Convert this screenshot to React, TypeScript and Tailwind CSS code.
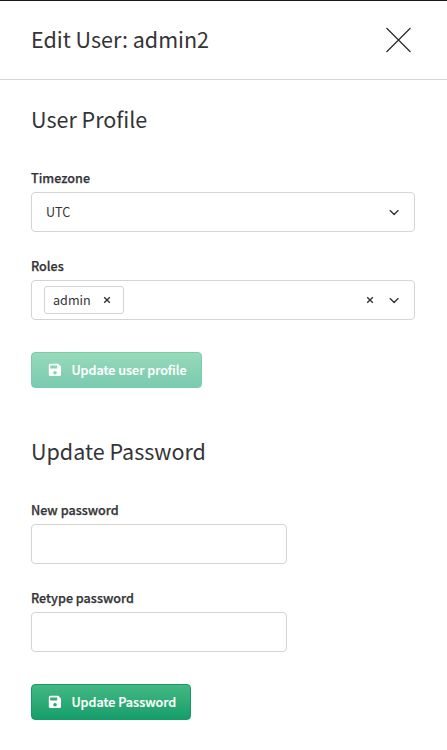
import type { ReactNode } from "react";

function Chevron() {
  return (
    <svg className="h-4 w-4 shrink-0" viewBox="0 0 16 16" fill="none" stroke="#343437" strokeWidth="1.35" strokeLinecap="round" strokeLinejoin="round">
      <path d="M4.1 6.6L8.1 10.5L12.1 6.6" />
    </svg>
  );
}

function Cross() {
  return (
    <svg className="h-2 w-2 shrink-0" viewBox="0 0 8 8" fill="none" stroke="#343437" strokeWidth="1.4">
      <path d="M1.2 1.2L6.8 6.8M6.8 1.2L1.2 6.8" />
    </svg>
  );
}

function SaveIcon() {
  return (
    <svg className="h-4 w-4 shrink-0" viewBox="0 0 16 16" fill="white">
      <path fillRule="evenodd" d="M3.4 1.8H11.2L14 4.4V12.6A1.5 1.5 0 0 1 12.5 14.1H3.4A1.6 1.6 0 0 1 1.8 12.5V3.5A1.7 1.7 0 0 1 3.4 1.8ZM3.2 3.5V6.6H10.2V3.5ZM8 8.9A1.8 1.8 0 1 0 8 12.5A1.8 1.8 0 1 0 8 8.9Z" />
    </svg>
  );
}

function Label({ children }: { children: ReactNode }) {
  return <div className="mb-1 h-5 text-[12.6px] leading-5 font-medium whitespace-nowrap [-webkit-text-stroke:0.25px_currentColor]">{children}</div>;
}

function Heading({ children }: { children: ReactNode }) {
  return <h2 className="h-8 text-[21.5px] leading-[30px] font-normal whitespace-nowrap">{children}</h2>;
}

export default function App() {
  return (
    <main className="h-[750px] w-[447px] overflow-hidden border-t border-[#17161a] bg-white font-['Noto_Sans_CJK_JP',sans-serif] text-[#343437]">
      <header className="flex h-[79px] items-center justify-between border-b border-[#d4d4d5] pr-9 pl-[31px]">
        <Heading>Edit User: admin2</Heading>
        <button aria-label="Close">
          <svg className="h-[26px] w-[26px]" viewBox="0 0 26 26" fill="none" stroke="#252528" strokeWidth="1.15">
            <path d="M1.5 1L25.5 25M25.5 1L1.5 25" />
          </svg>
        </button>
      </header>
      <div className="px-[31px] pt-6">
        <Heading>User Profile</Heading>
        <div className="mt-8 w-[384px]">
          <Label>Timezone</Label>
          <div className="flex h-10 items-center justify-between rounded-[4px] border border-[#d4d4d5] pr-3 pl-[14px] text-[12.6px]">
            <span>UTC</span>
            <Chevron />
          </div>
        </div>
        <div className="mt-6 w-[384px]">
          <Label>Roles</Label>
          <div className="flex h-10 items-center rounded-[4px] border border-[#d4d4d5] px-3">
            <div className="flex h-7 w-20 items-center justify-between rounded-[3px] border border-[#d4d4d5] pr-[12.5px] pl-2 text-[12.6px]">
              <span>admin</span>
              <Cross />
            </div>
            <div className="ml-auto flex items-center gap-3">
              <Cross />
              <Chevron />
            </div>
          </div>
        </div>
        <button className="mt-8 flex h-9 w-[171px] items-center rounded-[4px] border border-[#7bcbaf] bg-linear-to-b from-[#97dab9] to-[#7acab1] pl-[15px] text-[12.6px] font-medium whitespace-nowrap text-white [-webkit-text-stroke:0.2px_white]">
          <SaveIcon />
          <span className="ml-[8.4px]">Update user profile</span>
        </button>
        <div className="mt-12">
          <Heading>Update Password</Heading>
        </div>
        <div className="mt-8">
          <Label>New password</Label>
          <input type="password" aria-label="New password" className="block h-10 w-64 rounded-[4px] border border-[#d4d4d5]" />
        </div>
        <div className="mt-6">
          <Label>Retype password</Label>
          <input type="password" aria-label="Retype password" className="block h-10 w-64 rounded-[4px] border border-[#d4d4d5]" />
        </div>
        <button className="mt-8 flex h-9 w-40 items-center rounded-[4px] border border-[#149b68] bg-linear-to-b from-[#42b883] to-[#139e6b] pl-[15px] text-[12.6px] font-medium whitespace-nowrap text-white [-webkit-text-stroke:0.2px_white]">
          <SaveIcon />
          <span className="ml-[8.4px]">Update Password</span>
        </button>
      </div>
    </main>
  );
}
